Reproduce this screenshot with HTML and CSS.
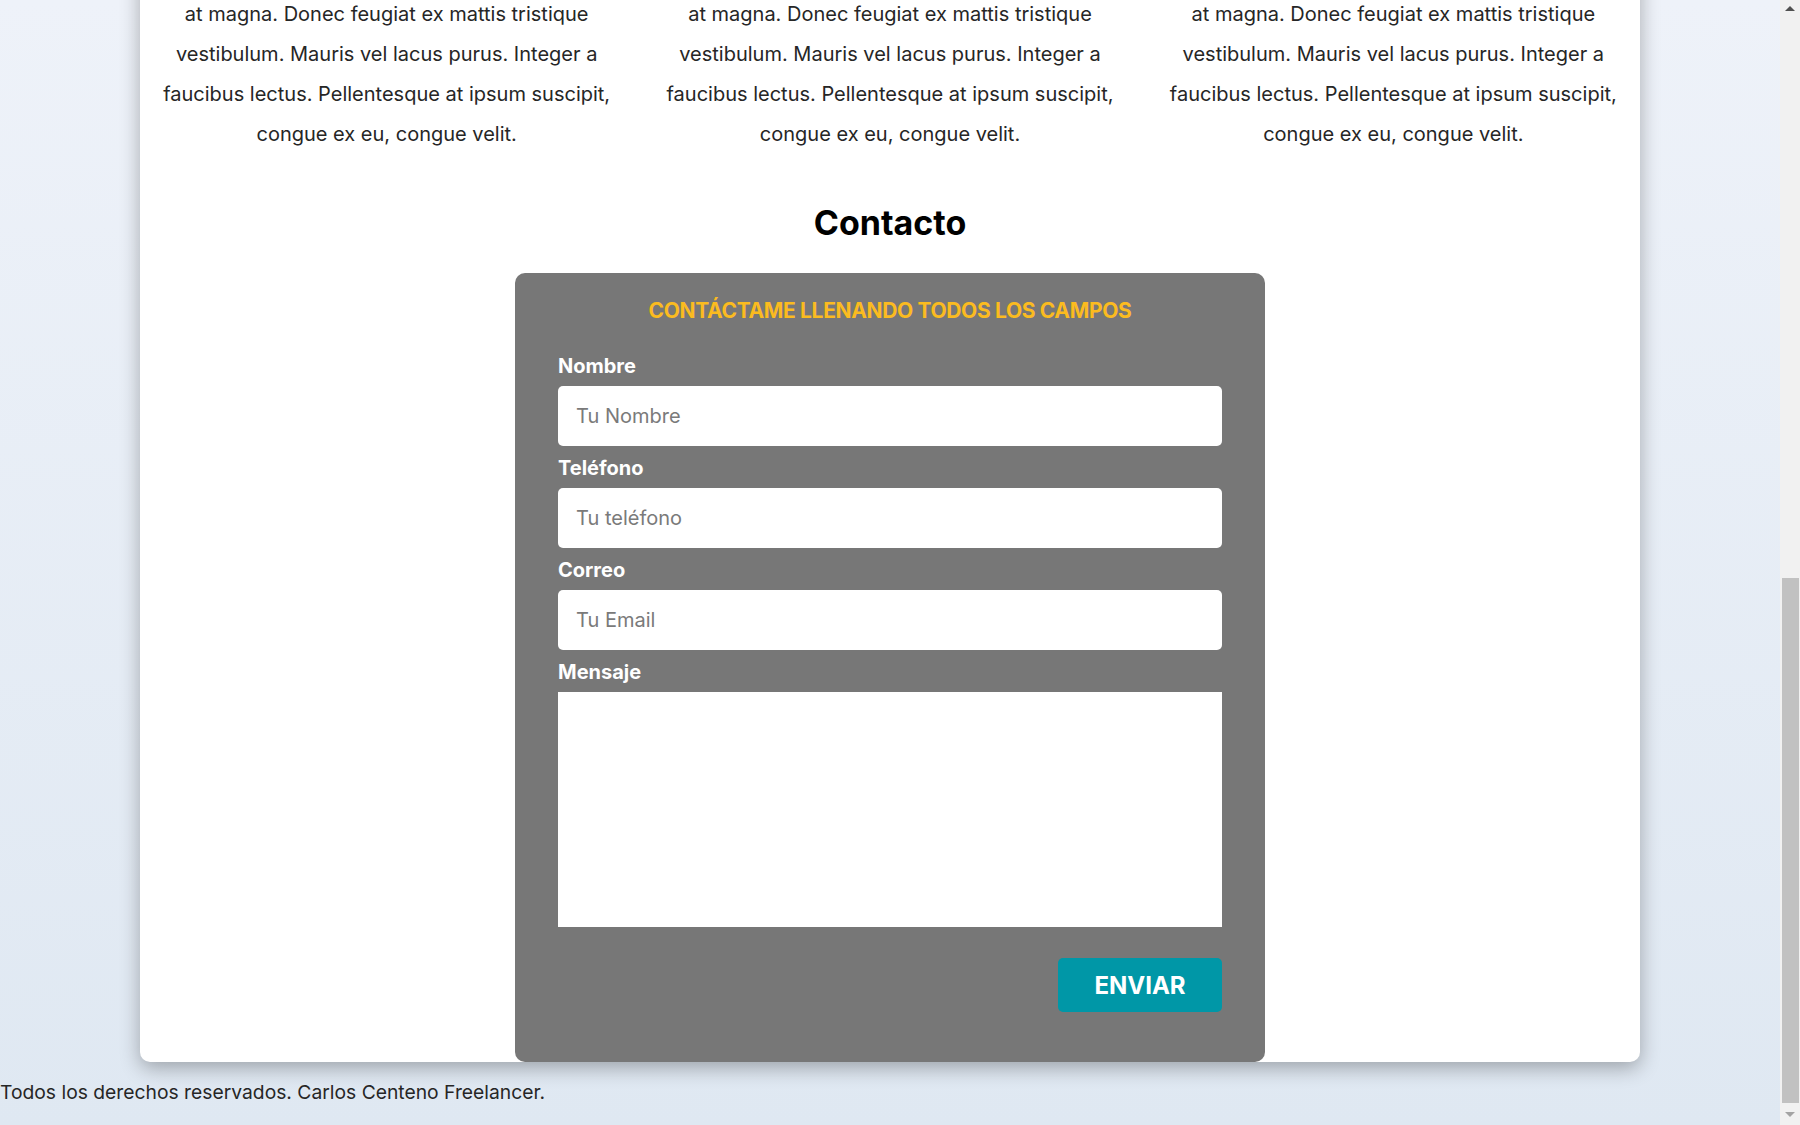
FILE: index.html
```html
<!DOCTYPE html>
<html lang="es">
<head>
<meta charset="UTF-8">
<title>Carlos Centeno Freelancer</title>
<link rel="stylesheet" href="styles.css">
</head>
<body>
<header class="hero">
  <h1 class="hero-titulo">Carlos Centeno</h1>
  <p class="hero-sub">Desarrollador Web Freelancer</p>
  <nav class="nav">
    <a href="#">Blog</a>
    <a href="#">Clientes</a>
    <a href="#">Contacto</a>
  </nav>
</header>

<div class="contenedor sombra">
  <main>
    <h2 class="titulo">Mis Servicios</h2>
    <div class="servicios">
      <section class="servicio">
        <svg class="icono" viewBox="0 0 24 24" width="80" height="80"><path d="M4 6h16v10H4z M9 20h6 M12 16v4" fill="none" stroke="#777" stroke-width="1.5"/></svg>
        <h3>Diseño Gráfico</h3>
        <p>Lorem ipsum dolor sit amet, consectetur adipiscing elit. Vivamus finibus mattis nisl, in blandit quam porta ut. Mauris maximus, mi quis fermentum consequat, nibh diam dictum enim, quis hendrerit neque elit<br>at magna. Donec feugiat ex mattis tristique vestibulum. Mauris vel lacus purus. Integer a faucibus lectus. Pellentesque at ipsum suscipit, congue ex eu, congue velit.</p>
      </section>
      <section class="servicio">
        <svg class="icono" viewBox="0 0 24 24" width="80" height="80"><path d="M8 8l-5 4 5 4 M16 8l5 4-5 4" fill="none" stroke="#777" stroke-width="1.5"/></svg>
        <h3>Desarrollo Web</h3>
        <p>Lorem ipsum dolor sit amet, consectetur adipiscing elit. Vivamus finibus mattis nisl, in blandit quam porta ut. Mauris maximus, mi quis fermentum consequat, nibh diam dictum enim, quis hendrerit neque elit<br>at magna. Donec feugiat ex mattis tristique vestibulum. Mauris vel lacus purus. Integer a faucibus lectus. Pellentesque at ipsum suscipit, congue ex eu, congue velit.</p>
      </section>
      <section class="servicio">
        <svg class="icono" viewBox="0 0 24 24" width="80" height="80"><path d="M7 3h10v18H7z M11 18h2" fill="none" stroke="#777" stroke-width="1.5"/></svg>
        <h3>Apps Móviles</h3>
        <p>Lorem ipsum dolor sit amet, consectetur adipiscing elit. Vivamus finibus mattis nisl, in blandit quam porta ut. Mauris maximus, mi quis fermentum consequat, nibh diam dictum enim, quis hendrerit neque elit<br>at magna. Donec feugiat ex mattis tristique vestibulum. Mauris vel lacus purus. Integer a faucibus lectus. Pellentesque at ipsum suscipit, congue ex eu, congue velit.</p>
      </section>
    </div>

    <section class="contacto">
      <h2 class="contacto-titulo">Contacto</h2>
      <form class="formulario">
        <p class="formulario-titulo">Contáctame llenando todos los campos</p>
        <div class="campo">
          <label for="nombre">Nombre</label>
          <input class="campo-input" type="text" id="nombre" placeholder="Tu Nombre">
        </div>
        <div class="campo">
          <label for="telefono">Teléfono</label>
          <input class="campo-input" type="tel" id="telefono" placeholder="Tu teléfono">
        </div>
        <div class="campo">
          <label for="correo">Correo</label>
          <input class="campo-input" type="email" id="correo" placeholder="Tu Email">
        </div>
        <div class="campo">
          <label for="mensaje">Mensaje</label>
          <textarea class="campo-textarea" id="mensaje"></textarea>
        </div>
        <div class="acciones">
          <input class="boton" type="submit" value="Enviar">
        </div>
      </form>
    </section>
  </main>
</div>

<footer class="footer">
  <p class="footer-texto">Todos los derechos reservados. Carlos Centeno Freelancer.</p>
</footer>

<div class="barra" aria-hidden="true">
  <span class="barra-boton"><span class="flecha flecha-arriba"></span></span>
  <span class="barra-espacio"></span>
  <span class="barra-pulgar"></span>
  <span class="barra-boton barra-boton-abajo"><span class="flecha flecha-abajo"></span></span>
</div>
<script src="script.js"></script>
</body>
</html>
```

FILE: styles.css
```css
html {
  background: linear-gradient(180deg, #eef2f9 0%, #dfe8f2 100%) fixed;
}

body {
  margin: 0;
  padding-right: 20px;
  font-family: Inter, "Open Sans", sans-serif;
  font-size: 20px;
  line-height: 2;
  color: #262626;
}

.hero {
  height: 740px;
  display: flex;
  flex-direction: column;
  align-items: center;
  justify-content: center;
}

.hero-titulo {
  margin: 0;
  font-size: 60px;
  line-height: 1.2;
}

.hero-sub {
  margin: 0 0 20px;
}

.nav {
  display: flex;
  gap: 40px;
}

.nav a {
  color: #0097a7;
  text-decoration: none;
  font-weight: 700;
}

.contenedor {
  max-width: 1500px;
  box-sizing: border-box;
  margin: 0 auto;
}

.sombra {
  background: #fff;
  border-radius: 10px;
  box-shadow: 0 6px 20px rgba(0, 0, 0, 0.3);
  padding: 20px 20px 0;
}

.titulo {
  text-align: center;
  font-size: 34px;
  line-height: 44px;
  margin: 30px 0;
}

.servicios {
  display: grid;
  grid-template-columns: repeat(3, 1fr);
  gap: 50px;
}

.servicio {
  text-align: center;
}

.icono {
  display: block;
  margin: 0 auto;
}

.servicio h3 {
  margin: 10px 0;
  font-size: 24px;
  line-height: 40px;
}

.servicio p {
  margin: 0;
}

.contacto-titulo {
  text-align: center;
  font-size: 34px;
  line-height: 44px;
  font-weight: 700;
  color: #000;
  margin: 47px 0 28px;
}

.formulario {
  width: 750px;
  margin: 0 auto;
  box-sizing: border-box;
  background: #777;
  border-radius: 10px;
  padding: 18px 43px 50px;
}

.formulario-titulo {
  margin: 0 0 23px;
  text-align: center;
  color: #fbbb1f;
  text-transform: uppercase;
  font-weight: 700;
  font-size: 21px;
  letter-spacing: -0.35px;
  line-height: 40px;
}

.campo label {
  display: block;
  color: #fff;
  font-weight: 700;
  font-size: 20px;
  line-height: 24px;
  margin-bottom: 8px;
}

.campo-input {
  display: block;
  width: 100%;
  height: 60px;
  box-sizing: border-box;
  border: none;
  border-radius: 5px;
  padding: 0 18px;
  margin: 0 0 10px;
  font-family: inherit;
  font-size: 20px;
  color: #333;
  background: #fff;
}

.campo-input::placeholder {
  color: #7a7a7a;
}

.campo-textarea {
  display: block;
  width: 100%;
  height: 235px;
  box-sizing: border-box;
  border: none;
  border-radius: 0;
  margin: 0;
  padding: 10px 18px;
  font-family: inherit;
  font-size: 20px;
  resize: none;
  background: #fff;
}

.acciones {
  display: flex;
  justify-content: flex-end;
  margin-top: 31px;
}

.boton {
  width: 164px;
  height: 54px;
  border: none;
  border-radius: 5px;
  background: #0097a7;
  color: #fff;
  font-family: inherit;
  font-weight: 700;
  font-size: 24px;
  text-transform: uppercase;
  cursor: pointer;
}

.footer-texto {
  margin: 0;
  padding: 10px 0 13px;
  font-size: 19.3px;
  line-height: 40px;
}

/* scrollbar del navegador (estado: desplazado al final) */
.barra {
  position: fixed;
  top: 0;
  right: 0;
  width: 20px;
  height: 100vh;
  background: #f1f1f1;
  display: flex;
  flex-direction: column;
  align-items: center;
}

.barra-boton {
  height: 17px;
  width: 100%;
  display: flex;
  align-items: center;
  justify-content: center;
}

.barra-boton-abajo {
  height: 22px;
}

.barra-espacio {
  flex: 1;
}

.barra-pulgar {
  width: 17px;
  height: 525px;
  background: #c1c1c1;
}

.flecha {
  width: 0;
  height: 0;
  border-left: 5px solid transparent;
  border-right: 5px solid transparent;
}

.flecha-arriba {
  border-bottom: 5px solid #505050;
}

.flecha-abajo {
  border-top: 5px solid #a3a3a3;
}
```

FILE: script.js
```js
function irAlFinal() {
  window.scrollTo(0, document.documentElement.scrollHeight);
}
irAlFinal();
window.addEventListener('load', irAlFinal);
```
